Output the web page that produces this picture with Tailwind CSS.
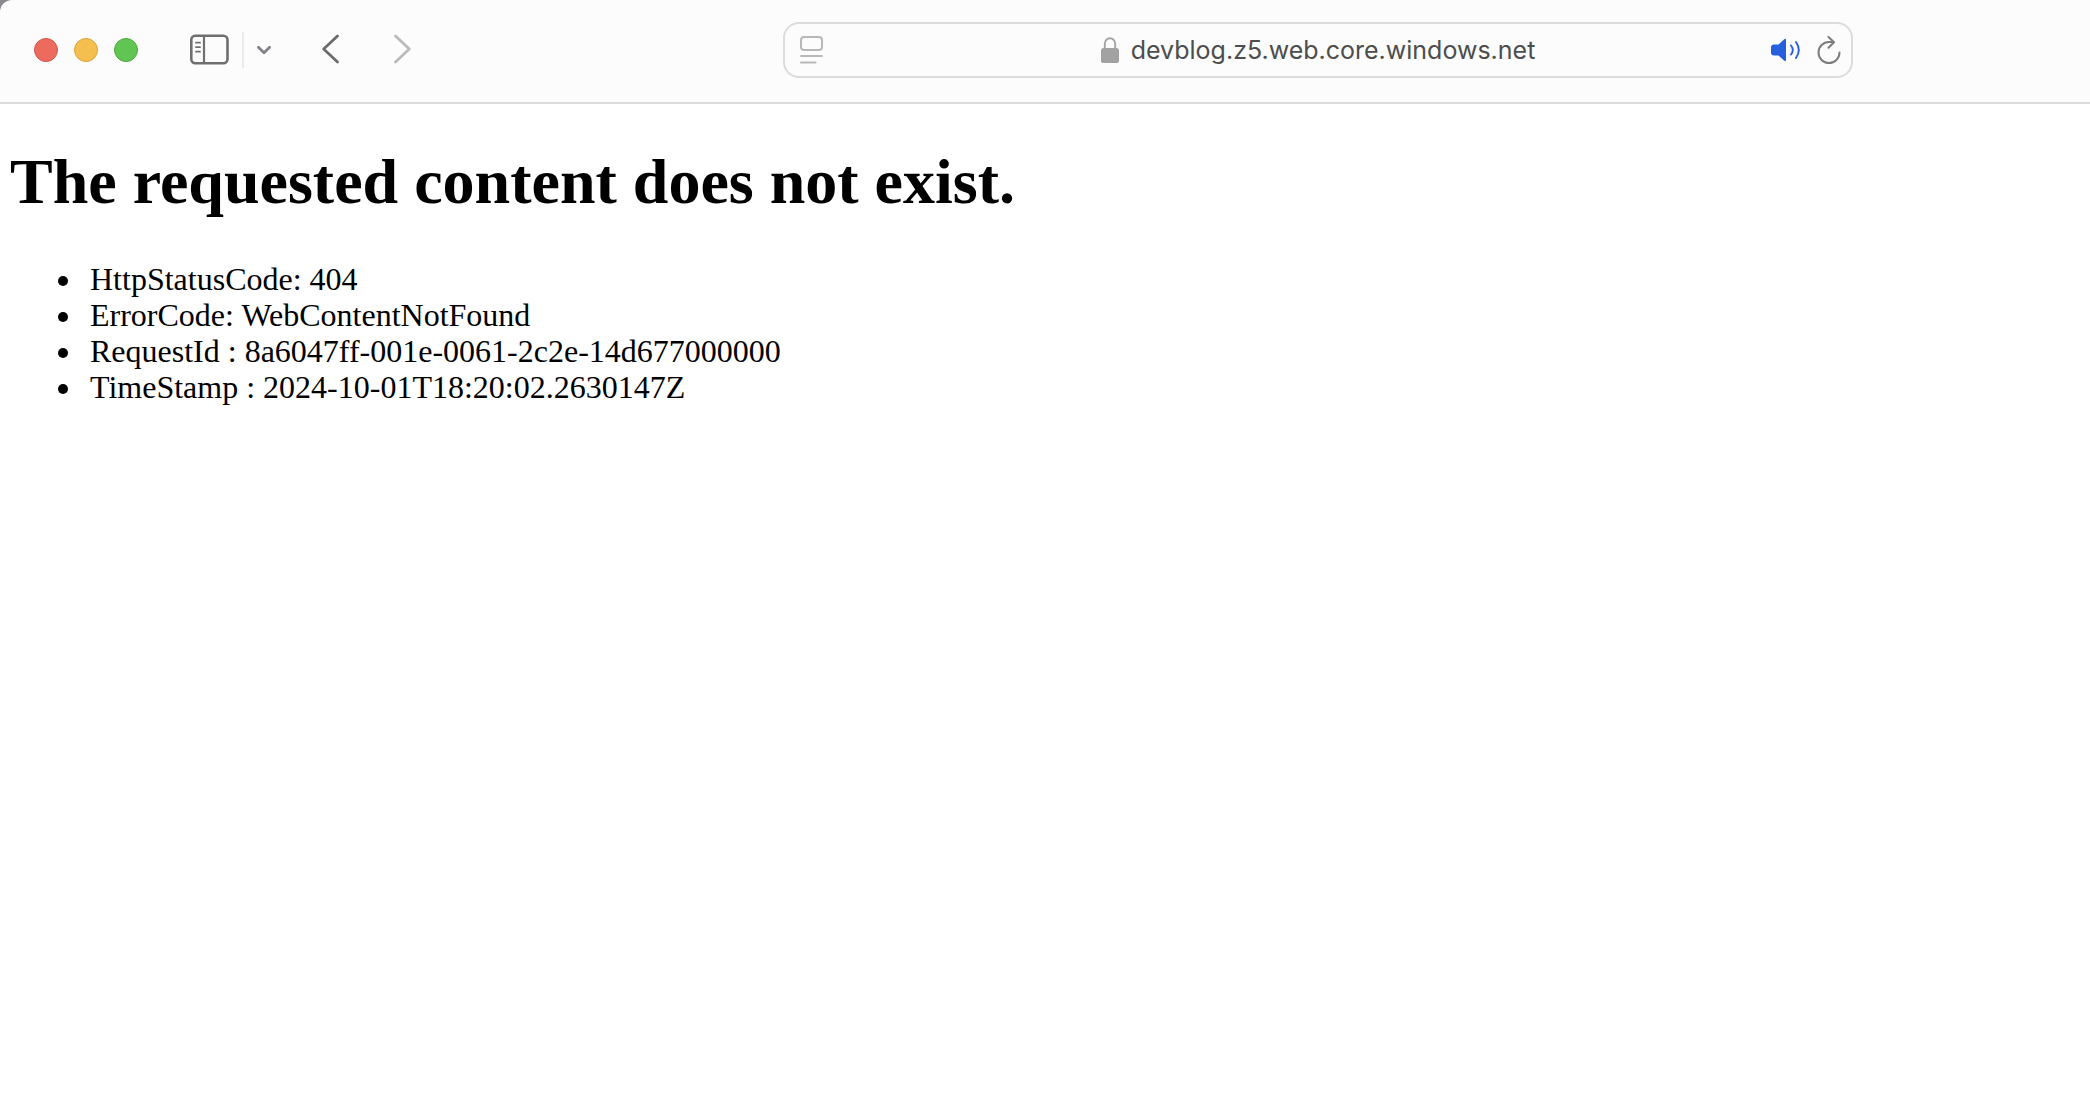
<!DOCTYPE html>
<html lang="en">
<head>
  <meta charset="utf-8">
  <meta name="viewport" content="width=device-width, initial-scale=1.0">
  <title>devblog.z5.web.core.windows.net</title>
  <script src="https://cdn.jsdelivr.net/npm/@tailwindcss/browser@4"></script>
</head>
<body class="min-h-screen bg-white text-black">
  <!-- Browser toolbar -->
  <header class="bg-[#8b8890]">
    <div class="flex items-center h-[104px] pl-[34px] pr-[237px] pb-[3px] bg-[#fcfcfc] border-b-2 border-[#dcdcdc] rounded-tl-[12px]">
      <!-- Window buttons -->
      <div class="flex gap-4">
        <button aria-label="Close" class="size-6 rounded-full bg-[#ec6a5e] border border-[#d5554a]"></button>
        <button aria-label="Minimize" class="size-6 rounded-full bg-[#f4bf4f] border border-[#d9a33c]"></button>
        <button aria-label="Zoom" class="size-6 rounded-full bg-[#61c554] border border-[#4dab3c]"></button>
      </div>

      <div class="flex items-center ml-[52px]">
        <button aria-label="Show sidebar">
          <svg class="block w-[39px] h-[32px]" viewBox="0 0 39 32" fill="none" stroke="#6f6f6f" stroke-linecap="round">
            <rect x="1.3" y="1.7" width="36.2" height="27.6" rx="4" stroke-width="2.6"/>
            <path d="M14 2.5v26.500" stroke-width="2.2"/>
            <path d="M6 8.700h4M6 13.200h4M6 17.700h4" stroke-width="1.8"/>
          </svg>
        </button>
        <span class="w-0.5 h-9 ml-[13px] bg-[#ebebeb]"></span>
        <button aria-label="Sidebar menu" class="ml-3">
          <svg class="block w-4 h-4" viewBox="0 0 16 16" fill="none" stroke="#85838a" stroke-width="2.8" stroke-linecap="round" stroke-linejoin="round">
            <path d="M2.400 5.200l5.600 5.600 5.600-5.600"/>
          </svg>
        </button>
      </div>

      <div class="flex items-center gap-[54px] ml-[50px]">
        <button aria-label="Back">
          <svg class="block w-[18px] h-8" viewBox="0 0 18 32" fill="none" stroke="#6a6a6a" stroke-width="2.7" stroke-linecap="round" stroke-linejoin="round">
            <path d="M15.500 2L1.700 15 15.500 28"/>
          </svg>
        </button>
        <button aria-label="Forward" disabled>
          <svg class="block w-[18px] h-8" viewBox="0 0 18 32" fill="none" stroke="#bababa" stroke-width="2.7" stroke-linecap="round" stroke-linejoin="round">
            <path d="M1.500 2l13.800 13-13.800 13"/>
          </svg>
        </button>
      </div>

      <!-- Address bar -->
      <div class="flex flex-1 items-center h-14 ml-[371px] px-[10px] border-2 border-[#dcdcdc] rounded-2xl">
        <div class="flex w-[76px] pl-1">
          <button aria-label="Page menu">
            <svg class="block w-6 h-7" viewBox="0 0 24 28" fill="none" stroke="#b8b8b8" stroke-width="2" stroke-linecap="round">
              <rect x="2" y="1" width="21" height="13" rx="3"/>
              <path d="M2 20h21M2 26.500h14.500"/>
            </svg>
          </button>
        </div>
        <div class="flex flex-1 items-center justify-center gap-3">
          <svg class="w-[18px] h-[26px]" viewBox="0 0 18 26">
            <path d="M3.800 12V7a5.200 5.800 0 0 1 10.400 0v5" fill="none" stroke="#a2a2a2" stroke-width="1.900"/>
            <rect y="11" width="18" height="15" rx="2.600" fill="#a2a2a2"/>
          </svg>
          <input type="text" aria-label="Address" value="devblog.z5.web.core.windows.net" class="field-sizing-content h-10 font-['Inter',sans-serif] text-[25px] text-[#4d4d4d] outline-none">
        </div>
        <div class="flex items-center justify-end gap-4 w-[76px]">
          <button aria-label="Mute tab">
            <svg class="block w-[30px] h-7" viewBox="0 0 30 28" fill="none" stroke="#2660dc" stroke-width="1.900" stroke-linecap="round">
              <path d="M3 8.500h4.500L13 3.500q2-1.600 2 .7v19.600q0 2.300-2 .7L7.500 19.500H3q-3 0-3-3v-5q0-3 3-3z" fill="#2660dc" stroke="none"/>
              <path d="M20 9.500q3.600 4.500 0 9M25 6q5.600 8 0 16"/>
            </svg>
          </button>
          <button aria-label="Reload">
            <svg class="block w-6 h-7" viewBox="0 0 24 28" fill="none" stroke="#7d7d7d" stroke-width="2" stroke-linecap="round" stroke-linejoin="round">
              <path d="M22.500 16.500A10.500 10.500 0 1 1 12 6h4.500"/>
              <path d="M11.500 1l5.500 5.200-5.500 5.600"/>
            </svg>
          </button>
        </div>
      </div>
    </div>
  </header>

  <!-- Error page -->
  <main class="px-[10px] pt-10 font-['Liberation_Serif',serif]">
    <h1 class="text-[64px] leading-[76px] font-bold">The requested content does not exist.</h1>
    <ul class="mt-[41px] pl-[74px] list-disc text-[32px] leading-9">
      <li class="pl-[6px]">HttpStatusCode: 404</li>
      <li class="pl-[6px]">ErrorCode: WebContentNotFound</li>
      <li class="pl-[6px]">RequestId : 8a6047ff-001e-0061-2c2e-14d677000000</li>
      <li class="pl-[6px]">TimeStamp : 2024-10-01T18:20:02.2630147Z</li>
    </ul>
  </main>
</body>
</html>
